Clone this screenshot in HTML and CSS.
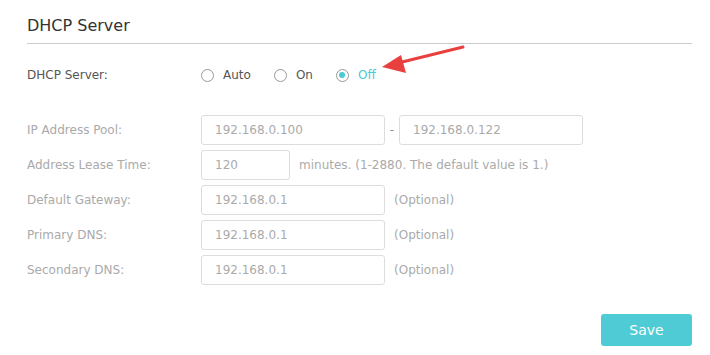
FILE: index.html
```html
<!DOCTYPE html>
<html lang="en">
<head>
    <meta charset="UTF-8">
    <title>DHCP Server</title>
    <link rel="stylesheet" href="styles.css">
</head>
<body>
    <div class="panel">
        <h2 class="title">DHCP Server</h2>

        <div class="row top">
            <label class="label dark">DHCP Server:</label>
            <div class="radios">
                <span class="radio"><span class="dot"></span>Auto</span>
                <span class="radio"><span class="dot"></span>On</span>
                <span class="radio checked"><span class="dot"></span>Off</span>
            </div>
        </div>

        <div class="fields">
            <div class="row">
                <label class="label">IP Address Pool:</label>
                <div class="input">192.168.0.100</div>
                <span class="dash">-</span>
                <div class="input">192.168.0.122</div>
            </div>
            <div class="row">
                <label class="label">Address Lease Time:</label>
                <div class="input short">120</div>
                <span class="note">minutes. (1-2880. The default value is 1.)</span>
            </div>
            <div class="row">
                <label class="label">Default Gateway:</label>
                <div class="input">192.168.0.1</div>
                <span class="note">(Optional)</span>
            </div>
            <div class="row">
                <label class="label">Primary DNS:</label>
                <div class="input">192.168.0.1</div>
                <span class="note">(Optional)</span>
            </div>
            <div class="row">
                <label class="label">Secondary DNS:</label>
                <div class="input">192.168.0.1</div>
                <span class="note">(Optional)</span>
            </div>
        </div>

        <div class="actions">
            <button class="save">Save</button>
        </div>

        <svg class="arrow" width="100" height="35" viewBox="0 0 100 35">
            <line x1="87" y1="4" x2="22" y2="20" stroke="#e8403e" stroke-width="3" stroke-linecap="round"/>
            <polygon points="6,24 25,12 30,30" fill="#e8403e"/>
        </svg>
    </div>
</body>
</html>
```

FILE: styles.css
```css
body {
    margin: 0;
    background: #fff;
    font-family: "DejaVu Sans", Verdana, sans-serif;
    font-size: 12px;
}
.panel {
    position: relative;
    width: 665px;
    padding: 0 0 0 27px;
}
.title {
    margin: 0;
    padding: 16px 0 8px;
    font-size: 16px;
    font-weight: normal;
    color: #333;
    border-bottom: 1px solid #ccc;
}
.row {
    display: flex;
    align-items: center;
    height: 30px;
}
.row.top {
    margin-top: 16px;
}
.label {
    width: 174px;
    color: #aaa;
}
.label.dark {
    color: #555;
}
.radios {
    display: flex;
    gap: 23px;
}
.radio {
    display: flex;
    align-items: center;
    gap: 9px;
    color: #555;
}
.dot {
    width: 11px;
    height: 11px;
    border: 1px solid #999;
    border-radius: 50%;
    box-sizing: content-box;
    position: relative;
}
.radio.checked {
    color: #4acbd6;
}
.radio.checked .dot::after {
    content: "";
    position: absolute;
    left: 2.5px;
    top: 2.5px;
    width: 6px;
    height: 6px;
    border-radius: 50%;
    background: #4acbd6;
}
.fields {
    margin-top: 25px;
    display: flex;
    flex-direction: column;
    gap: 5px;
}
.input {
    box-sizing: border-box;
    width: 184px;
    height: 30px;
    border: 1px solid #ddd;
    border-radius: 3px;
    padding: 0 13px;
    line-height: 28px;
    color: #aaa;
}
.input.short {
    width: 89px;
}
.dash {
    width: 14px;
    text-align: center;
    color: #888;
}
.note {
    margin-left: 9px;
    color: #aaa;
}
.actions {
    display: flex;
    justify-content: flex-end;
    margin-top: 29px;
}
.save {
    width: 91px;
    height: 32px;
    border: none;
    border-radius: 3px;
    background: #4ecbd5;
    color: #fff;
    font-family: "DejaVu Sans", Verdana, sans-serif;
    font-size: 14px;
}
.arrow {
    position: absolute;
    left: 376px;
    top: 43px;
}
```
